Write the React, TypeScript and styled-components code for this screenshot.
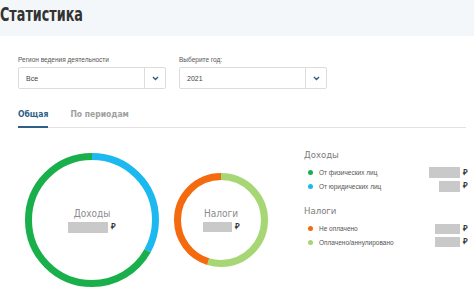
import React from 'react'
import styled, { createGlobalStyle } from 'styled-components'

const GlobalStyle = createGlobalStyle`
  html, body {
    margin: 0;
    padding: 0;
    background: #fff;
    overflow: hidden;
  }
  body {
    font-family: 'Liberation Sans', Arial, sans-serif;
    color: #333;
  }
`

const COND = `'DejaVu Sans Condensed', 'DejaVu Sans', sans-serif`

const Page = styled.div`
  width: 474px;
  height: 288px;
  overflow: hidden;
`

const Header = styled.header`
  height: 36px;
  background: #f3f7fa;
  display: flex;
  align-items: flex-start;
`

const Title = styled.h1`
  margin: 0;
  padding: 2px 0 0 0;
  font-family: ${COND};
  font-weight: bold;
  font-size: 20px;
  line-height: 24px;
  color: #333;
  transform: scaleX(0.71);
  transform-origin: left center;
  white-space: nowrap;
`

const Filters = styled.section`
  display: flex;
  gap: 13px;
  padding: 20px 0 0 18px;
`

const Field = styled.div`
  display: flex;
  flex-direction: column;
  gap: 3px;
  width: 148px;
`

const Label = styled.label`
  font-size: 6.5px;
  line-height: 8px;
  color: #555;
`

const Select = styled.div`
  height: 22px;
  border: 1px solid #dcdcdc;
  border-radius: 2px;
  box-sizing: border-box;
  display: flex;
  align-items: stretch;
  background: #fff;
`

const SelectValue = styled.div`
  flex: 1;
  display: flex;
  align-items: center;
  padding-left: 7px;
  font-size: 7px;
  color: #444;
`

const SelectArrow = styled.div`
  width: 20px;
  border-left: 1px solid #dcdcdc;
  display: flex;
  align-items: center;
  justify-content: center;
  color: #2b5a82;
`

const Tabs = styled.nav`
  display: flex;
  margin: 19px 8px 0 18px;
  border-bottom: 1px solid #e2e2e2;
  gap: 22px;
`

const Tab = styled.div<{ active?: boolean }>`
  font-family: ${COND};
  font-size: 8.5px;
  font-weight: bold;
  line-height: 12px;
  padding-bottom: 6px;
  margin-bottom: -1px;
  color: ${({ active }) => (active ? '#2d5f88' : '#a0a0a0')};
  border-bottom: 2px solid ${({ active }) => (active ? '#2d5f88' : 'transparent')};
`

const Stats = styled.section`
  display: flex;
  align-items: flex-start;
  padding: 25px 0 0 25px;
`

const Charts = styled.div`
  display: flex;
  align-items: center;
  gap: 15px;
`

const Donut = styled.div<{ size: number }>`
  display: grid;
  width: ${({ size }) => size}px;
  height: ${({ size }) => size}px;
  & > * {
    grid-area: 1 / 1;
  }
`

const Center = styled.div`
  display: flex;
  flex-direction: column;
  align-items: center;
  justify-content: center;
  gap: 2px;
`

const CenterLabel = styled.div`
  font-family: ${COND};
  font-size: 10px;
  line-height: 12px;
  color: #8c8c8c;
`

const Amount = styled.div`
  display: flex;
  align-items: center;
  gap: 3px;
`

const Hidden = styled.span<{ w: number; h: number }>`
  display: block;
  width: ${({ w }) => w}px;
  height: ${({ h }) => h}px;
  background: #c9c9c9;
`

const Rub = styled.span`
  font-size: 8px;
  font-weight: bold;
  color: #333;
  line-height: 10px;
`

const Legend = styled.div`
  margin-left: 36px;
  margin-top: -4px;
  width: 164px;
  display: flex;
  flex-direction: column;
`

const LegendTitle = styled.div`
  font-family: ${COND};
  font-size: 9.5px;
  line-height: 12px;
  color: #7c7c7c;
  margin-bottom: 5px;
`

const LegendGroup = styled.div`
  display: flex;
  flex-direction: column;
  margin-bottom: 12px;
`

const Row = styled.div`
  display: flex;
  align-items: center;
  height: 13.5px;
`

const Dot = styled.span<{ color: string }>`
  width: 5px;
  height: 5px;
  border-radius: 50%;
  background: ${({ color }) => color};
  margin: 0 6px 0 4px;
  flex-shrink: 0;
`

const RowText = styled.span`
  flex: 1;
  font-size: 6.5px;
  color: #555;
`

type Segment = { color: string; value: number }

function Ring({ size, stroke, segments }: { size: number; stroke: number; segments: Segment[] }) {
  const r = (size - stroke) / 2
  const c = 2 * Math.PI * r
  let offset = 0
  return (
    <svg width={size} height={size} viewBox={`0 0 ${size} ${size}`}>
      <g transform={`rotate(-90 ${size / 2} ${size / 2})`}>
        {segments.map((s, i) => {
          const len = s.value * c
          const el = (
            <circle
              key={i}
              cx={size / 2}
              cy={size / 2}
              r={r}
              fill="none"
              stroke={s.color}
              strokeWidth={stroke}
              strokeDasharray={`${len} ${c - len}`}
              strokeDashoffset={-offset}
            />
          )
          offset += len
          return el
        })}
      </g>
    </svg>
  )
}

const Chevron = () => (
  <svg width="7" height="5" viewBox="0 0 7 5">
    <path d="M1 1l2.5 2.5L6 1" fill="none" stroke="currentColor" strokeWidth="1.4" />
  </svg>
)

const GREEN = '#19b04b'
const BLUE = '#1cb8f0'
const ORANGE = '#f46a0e'
const LIGHT = '#a7d774'

export default function App() {
  return (
    <Page>
      <GlobalStyle />
      <Header>
        <Title>Статистика</Title>
      </Header>

      <Filters>
        <Field>
          <Label>Регион ведения деятельности</Label>
          <Select>
            <SelectValue>Все</SelectValue>
            <SelectArrow>
              <Chevron />
            </SelectArrow>
          </Select>
        </Field>
        <Field>
          <Label>Выберите год:</Label>
          <Select>
            <SelectValue>2021</SelectValue>
            <SelectArrow>
              <Chevron />
            </SelectArrow>
          </Select>
        </Field>
      </Filters>

      <Tabs>
        <Tab active>Общая</Tab>
        <Tab>По периодам</Tab>
      </Tabs>

      <Stats>
        <Charts>
          <Donut size={134}>
            <Ring
              size={134}
              stroke={7}
              segments={[
                { color: BLUE, value: 0.33 },
                { color: GREEN, value: 0.67 }
              ]}
            />
            <Center>
              <CenterLabel>Доходы</CenterLabel>
              <Amount>
                <Hidden w={40} h={11} />
                <Rub>₽</Rub>
              </Amount>
            </Center>
          </Donut>
          <Donut size={94}>
            <Ring
              size={94}
              stroke={7}
              segments={[
                { color: LIGHT, value: 0.547 },
                { color: ORANGE, value: 0.453 }
              ]}
            />
            <Center>
              <CenterLabel>Налоги</CenterLabel>
              <Amount>
                <Hidden w={29} h={10} />
                <Rub>₽</Rub>
              </Amount>
            </Center>
          </Donut>
        </Charts>

        <Legend>
          <LegendGroup>
            <LegendTitle>Доходы</LegendTitle>
            <Row>
              <Dot color={GREEN} />
              <RowText>От физических лиц</RowText>
              <Amount>
                <Hidden w={31} h={11} />
                <Rub>₽</Rub>
              </Amount>
            </Row>
            <Row>
              <Dot color={BLUE} />
              <RowText>От юридических лиц</RowText>
              <Amount>
                <Hidden w={21} h={11} />
                <Rub>₽</Rub>
              </Amount>
            </Row>
          </LegendGroup>
          <LegendGroup>
            <LegendTitle>Налоги</LegendTitle>
            <Row>
              <Dot color={ORANGE} />
              <RowText>Не оплачено</RowText>
              <Amount>
                <Hidden w={25} h={10} />
                <Rub>₽</Rub>
              </Amount>
            </Row>
            <Row>
              <Dot color={LIGHT} />
              <RowText>Оплачено/аннулировано</RowText>
              <Amount>
                <Hidden w={25} h={10} />
                <Rub>₽</Rub>
              </Amount>
            </Row>
          </LegendGroup>
        </Legend>
      </Stats>
    </Page>
  )
}
